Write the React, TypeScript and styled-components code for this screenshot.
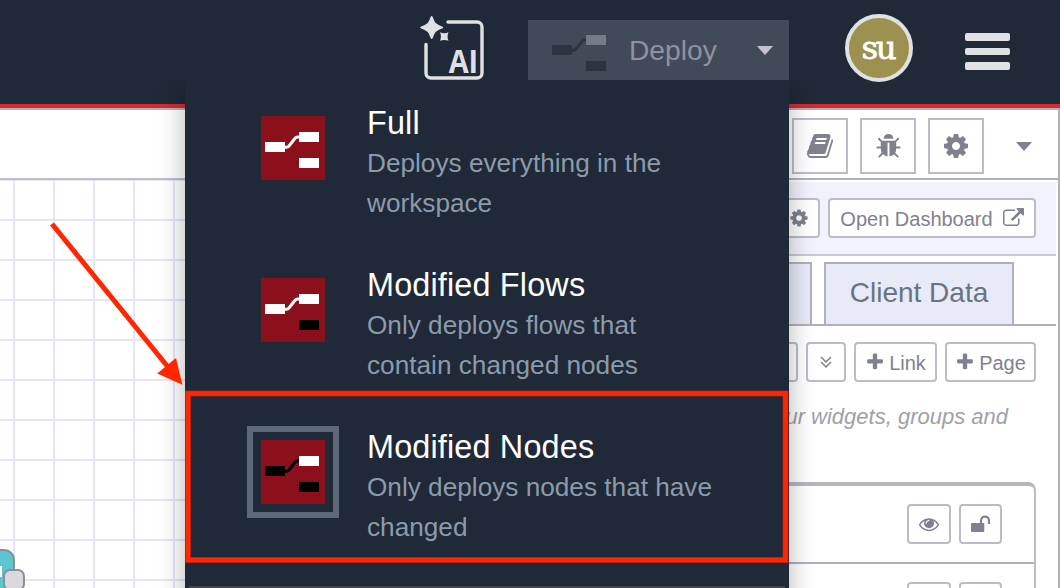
import React from 'react';
import styled, { createGlobalStyle } from 'styled-components';

const Global = createGlobalStyle`
  * { box-sizing: border-box; }
  body { margin: 0; overflow: hidden; background: #fff; font-family: "Liberation Sans", Arial, sans-serif; }
`;

const paths = {
  cog: 'M1152 896q0-106-75-181t-181-75-181 75-75 181 75 181 181 75 181-75 75-181zm512-109v222q0 12-8 23t-20 13l-185 28q-19 54-39 91 35 50 107 138 10 12 10 25t-9 23q-27 37-99 108t-94 71q-12 0-26-9l-138-108q-44 23-91 38-16 136-29 186-7 28-36 28h-222q-14 0-24.5-8.5t-11.5-21.5l-28-184q-49-16-90-37l-141 107q-10 9-25 9-14 0-25-11-126-114-165-168-7-10-7-23 0-12 8-23 15-21 51-66.5t54-70.5q-27-50-41-99l-183-27q-13-2-21-12.5t-8-23.5v-222q0-12 8-23t19-13l186-28q14-46 39-92-40-57-107-138-10-12-10-24 0-10 9-23 26-36 98.5-107.5t94.5-71.5q13 0 26 10l138 107q44-23 91-38 16-136 29-186 7-28 36-28h222q14 0 24.5 8.5t11.5 21.5l28 184q49 16 90 37l142-107q9-9 24-9 13 0 25 10 129 119 165 170 7 8 7 22 0 12-8 23-15 21-51 66.5t-54 70.5q26 50 41 98l183 28q13 2 21 12.5t8 23.5z',
  book: 'M1703 478q40 57 18 129l-275 906q-19 64-76.5 107.5t-122.5 43.5h-923q-77 0-148.5-53.5t-99.5-131.5q-24-67-2-127 0-4 3-27t4-37q1-8-3-21.5t-3-19.5q2-11 8-21t16.5-23.5 16.5-23.5q23-38 45-91.5t30-91.5q3-10 .5-30t-.5-28q3-11 17-28t17-23q21-36 42-92t25-90q1-9-2.5-32t.5-28q4-13 22-30.5t22-22.5q19-26 42.5-84.5t27.5-96.5q1-8-3-25.5t-2-26.5q2-8 9-18t18-23 17-21q8-12 16.5-30.5t15-35 16-36 19.5-32 26.5-23.5 36-11.5 47.5 5.5l-1 3q38-9 51-9h761q74 0 114 56t18 130l-274 906q-36 119-71.5 153.5t-128.5 34.5h-869q-27 0-38 15-11 16-1 43 24 70 144 70h923q29 0 56-15.5t35-41.5l300-987q7-22 5-57 38 15 59 43zm-1064 2q-4 13 2 22.5t20 9.5h608q13 0 25.5-9.5t16.5-22.5l21-64q4-13-2-22.5t-20-9.5h-608q-13 0-25.5 9.5t-16.5 22.5zm-83 256q-4 13 2 22.5t20 9.5h608q13 0 25.5-9.5t16.5-22.5l21-64q4-13-2-22.5t-20-9.5h-608q-13 0-25.5 9.5t-16.5 22.5z',
  bug: 'M1696 960q0 26-19 45t-45 19h-224q0 171-67 290l208 209q19 19 19 45t-19 45q-18 19-45 19t-45-19l-198-197q-5 5-15 13t-42 28.5-65 36.5-82 29-97 13v-896h-128v896q-51 0-101.5-13.5t-87-33-66-39-43.5-32.5l-15-14-183 207q-20 21-48 21-24 0-43-16-19-18-20.5-44.5t15.5-46.5l202-227q-58-114-58-274h-224q-26 0-45-19t-19-45 19-45 45-19h224v-294l-173-173q-19-19-19-45t19-45 45-19 45 19l173 173h844l173-173q19-19 45-19t45 19 19 45-19 45l-173 173v294h224q26 0 45 19t19 45zm-480-576h-640q0-133 93.5-226.5t226.5-93.5 226.5 93.5 93.5 226.5z',
  external: 'M1408 928v320q0 119-84.5 203.5t-203.5 84.5h-832q-119 0-203.5-84.5t-84.5-203.5v-832q0-119 84.5-203.5t203.5-84.5h704q14 0 23 9t9 23v64q0 14-9 23t-23 9h-704q-66 0-113 47t-47 113v832q0 66 47 113t113 47h832q66 0 113-47t47-113v-320q0-14 9-23t23-9h64q14 0 23 9t9 23zm384-864v512q0 26-19 45t-45 19-45-19l-176-176-652 652q-10 10-23 10t-23-10l-114-114q-10-10-10-23t10-23l652-652-176-176q-19-19-19-45t19-45 45-19h512q26 0 45 19t19 45z',
  plus: 'M1600 736v192q0 40-28 68t-68 28h-416v416q0 40-28 68t-68 28h-192q-40 0-68-28t-28-68v-416h-416q-40 0-68-28t-28-68v-192q0-40 28-68t68-28h416v-416q0-40 28-68t68-28h192q40 0 68 28t28 68v416h416q40 0 68 28t28 68z',
  eye: 'M1664 960q-152-236-381-353 61 104 61 225 0 185-131.5 316.5t-316.5 131.5-316.5-131.5-131.5-316.5q0-121 61-225-229 117-381 353 133 205 333.5 326.5t434.5 121.5 434.5-121.5 333.5-326.5zm-720-384q0-20-14-34t-34-14q-125 0-214.5 89.5t-89.5 214.5q0 20 14 34t34 14 34-14 14-34q0-86 61-147t147-61q20 0 34-14t14-34zm848 384q0 34-20 69-140 230-376.5 368.5t-499.5 138.5-499.5-139-376.5-368q-20-35-20-69t20-69q140-229 376.5-368t499.5-139 499.5 139 376.5 368q20 35 20 69z',
};

const Glyph = ({ name, size }: { name: keyof typeof paths; size: number }) => (
  <svg width={size} height={size} viewBox="0 0 1792 1792" fill="currentColor"><path d={paths[name]} /></svg>
);

const Page = styled.div`
  position: relative;
  display: flex;
  flex-direction: column;
  width: 1060px;
  height: 588px;
  overflow: hidden;
`;

const Header = styled.header`
  display: flex;
  flex: none;
  align-items: flex-start;
  height: 108px;
  padding-left: 419px;
  background: #1f2937;
  border-bottom: 4px solid #d52b2b;
`;

const AiButton = styled.div`
  width: 66px;
  margin: 15px 43px 0 0;
  height: 66px;
  svg { display: block; }
`;

const DeployButton = styled.div`
  display: flex;
  align-items: center;
  width: 261px;
  height: 60px;
  margin-top: 20px;
  padding: 0 16px 0 24px;
  background: #414a58;
  > svg { margin-top: 6px; }
`;

const DeployLabel = styled.span`
  flex: 1;
  padding-left: 23px;
  color: #91919f;
  font-size: 28.2px;
  line-height: 60px;
`;

const Caret = styled.span<{ $color: string }>`
  border: 8px solid transparent;
  border-top: 9px solid ${(p) => p.$color};
  border-bottom: 0;
`;

const Avatar = styled.div`
  display: flex;
  justify-content: center;
  width: 68px;
  height: 68px;
  margin: 14px 52px 0 56px;
  border: 4px solid #e0e1e3;
  border-radius: 50%;
  background: #9c914f;
  color: #fff;
  font: 32.5px/60px "DejaVu Serif", serif;
  letter-spacing: -2.2px;
  text-indent: -2px;
  -webkit-text-stroke: 0.8px #fff;
`;

const Burger = styled.div`
  display: flex;
  flex-direction: column;
  gap: 7px;
  width: 45px;
  margin-top: 33px;
`;
const Bar = styled.span`
  height: 7.7px;
  border-radius: 2px;
  background: #e0e1e3;
`;

const Body = styled.div`
  display: flex;
  flex: 1;
  min-height: 0;
  border-top: 2px solid #b0b0bd;
`;

const Workspace = styled.main`
  display: flex;
  flex-direction: column;
  width: 700px;
`;
const FlowTabs = styled.div`
  height: 70px;
  border-bottom: 2px solid #bfbfcb;
`;
const Canvas = styled.div`
  position: relative;
  flex: 1;
  background:
    linear-gradient(90deg, #e4e5f6 2px, transparent 2px) 13px 0 / 40px 40px,
    linear-gradient(#e4e5f6 2px, transparent 2px) 0 -1px / 40px 40px;
`;
const FlowNode = styled.svg`
  position: absolute;
  left: 0;
  top: 366px;
`;

const Sidebar = styled.aside`
  display: flex;
  flex-direction: column;
  width: 360px;
  border-right: 2px solid #b0b0bd;
  color: #80818f;
`;
const SidebarTabs = styled.div`
  display: flex;
  flex: none;
  justify-content: flex-end;
  gap: 12px;
  height: 70px;
  padding: 8px 0 0;
  border-bottom: 2px solid #b0b0bd;
`;
const SidebarTab = styled.div<{ $plain?: boolean }>`
  display: flex;
  align-items: center;
  justify-content: center;
  width: 56px;
  height: 56px;
  border: 2px solid ${(p) => (p.$plain ? 'transparent' : '#bcbcc9')};
  margin-right: ${(p) => (p.$plain ? 6 : 0)}px;
`;

const DashboardBar = styled.div`
  display: flex;
  flex: none;
  justify-content: flex-end;
  gap: 8px;
  height: 74px;
  margin: 2px 2px 0 0;
  padding: 16px 20px 0 0;
  background: #f2f2fc;
  border-bottom: 2px solid #c9c9d4;
`;
const SmallButton = styled.div<{ $w: number; $gap?: number }>`
  display: flex;
  align-items: center;
  justify-content: center;
  gap: ${(p) => p.$gap ?? 3}px;
  width: ${(p) => p.$w}px;
  height: 40px;
  border: 2px solid #bcbcc9;
  border-radius: 4px;
  background: #fff;
  font-size: 20px;
  white-space: nowrap;
`;
const ButtonText = styled.span`
  padding-top: 2px;
`;

const PanelTabs = styled.div`
  display: flex;
  flex: none;
  justify-content: flex-end;
  gap: 12px;
  height: 70px;
  margin-right: 2px;
  padding: 6px 42px 0 0;
  border-bottom: 2px solid #b0b0bd;
`;
const PanelTab = styled.div<{ $w: number }>`
  width: ${(p) => p.$w}px;
  height: 62px;
  border: 2px solid #b0b0bd;
  border-bottom: 0;
  background: #e8eaf7;
  color: #687483;
  font-size: 28px;
  line-height: 58px;
  text-align: center;
`;
const PageActions = styled.div`
  display: flex;
  flex: none;
  justify-content: flex-end;
  gap: 8px;
  margin-top: 16px;
  padding-right: 22px;
`;
const Hint = styled.p`
  flex: none;
  height: 70px;
  margin: 20px 50px 0 0;
  color: #9fa0a8;
  font-size: 22px;
  font-style: italic;
  line-height: 30px;
  text-align: right;
  white-space: nowrap;
`;
const GroupList = styled.div`
  flex: 1;
  margin: 10px 22px 0 0;
  border: 2px solid #bcbcc9;
  border-top: 4px solid #b6b6c2;
  border-bottom: 0;
  border-radius: 0 8px 0 0;
`;
const GroupRow = styled.div`
  display: flex;
  justify-content: flex-end;
  gap: 8px;
  height: 78px;
  padding: 18px 32px 0 0;
  border-bottom: 2px solid #b0b0bd;
`;

const Menu = styled.div`
  position: absolute;
  left: 185px;
  top: 80px;
  width: 604px;
  height: 530px;
  padding-top: 12px;
  background: #1f2937;
  box-shadow: 0 8px 24px rgba(0, 0, 0, 0.3);
  clip-path: inset(0 -40px 0 -40px);
`;
const MenuItem = styled.div`
  display: flex;
  height: 162px;
  padding: 10px 20px 0 62px;
`;
const IconFrame = styled.div<{ $selected?: boolean }>`
  width: 92px;
  height: 92px;
  padding: 8px;
  border: 6px solid ${(p) => (p.$selected ? '#5d6977' : 'transparent')};
`;
const IconTile = styled.div`
  display: flex;
  width: 64px;
  height: 64px;
  padding: 16px 4px;
  background: #8c101c;
`;
const MenuText = styled.div`
  padding: 1px 0 0 28px;
  white-space: nowrap;
`;
const MenuTitle = styled.div`
  color: #fff;
  font-size: 32.4px;
  line-height: 40px;
  letter-spacing: 0.16px;
`;
const MenuDescription = styled.div`
  color: #8c9bab;
  font-size: 26.2px;
  line-height: 40px;
`;
const Separator = styled.div`
  height: 2px;
  margin: 8px 4px 0;
  background: #444;
`;
const Callout = styled.svg`
  position: absolute;
  inset: 0;
`;

const FlowGlyph = ({ a, b, c }: { a: string; b: string; c: string }) => (
  <svg width="54" height="36" viewBox="0 0 54 36">
    <path d="M20 15.200h1.500Q23 15.200 24.200 13.700L29.800 6.500Q31 5 32.500 5H34" fill="none" stroke={a} strokeWidth="3" />
    <rect y="10" width="20" height="10" fill={a} />
    <rect x="34" width="20" height="10" fill={b} />
    <rect x="34" y="26" width="20" height="10" fill={c} />
  </svg>
);

const modes = [
  { title: 'Full', lines: ['Deploys everything in the', 'workspace'], colors: ['#fff', '#fff', '#fff'] },
  { title: 'Modified Flows', lines: ['Only deploys flows that', 'contain changed nodes'], colors: ['#fff', '#fff', '#000'] },
  { title: 'Modified Nodes', lines: ['Only deploys nodes that have', 'changed'], colors: ['#000', '#fff', '#000'], selected: true },
];

const EyeLock = () => (
  <>
    <SmallButton $w={44}><Glyph name="eye" size={20} /></SmallButton>
    <SmallButton $w={43}>
      <svg width="20" height="18" viewBox="0 0 20 18">
        <rect x="0" y="8" width="13.300" height="9" rx="1" fill="currentColor" />
        <path d="M10 8V5.700a4 4 0 0 1 8 0V8.900" fill="none" stroke="currentColor" strokeWidth="2.200" />
      </svg>
    </SmallButton>
  </>
);

export default function App() {
  return (
    <Page>
      <Global />
      <Header>
        <AiButton>
          <svg width="66" height="66" viewBox="0 0 66 66" fill="#e0e1e3">
            <path d="M29 7h29a5 5 0 0 1 5 5v46a5 5 0 0 1-5 5H12a5 5 0 0 1-5-5V29.500" fill="none" stroke="#e0e1e3" strokeWidth="3.400" strokeLinecap="round" />
            <path d="M12.700 1c1.400 0 1.800 4.500 4 7 2.500 2.500 7.500 3.200 7.500 4.500s-5 2-7.500 4.500c-2.200 2.500-2.600 7-4 7s-1.800-4.500-4-7c-2.500-2.500-7.500-3.200-7.500-4.500s5-2 7.500-4.500C10.900 5.500 11.300 1 12.700 1z" />
            <path d="M21 17.300c2.500 1.200 6 1.200 8.500 0-1.200 2.500-1.200 6 0 8.500-2.500-1.200-6-1.200-8.500 0 1.200-2.500 1.200-6 0-8.500z" />
            <text x="29.700" y="57.500" fontFamily="Open Sans, sans-serif" fontWeight="700" fontSize="31.500" textLength="29.500" lengthAdjust="spacingAndGlyphs">AI</text>
          </svg>
        </AiButton>
        <DeployButton>
          <FlowGlyph a="#2c3441" b="#757b89" c="#2c3441" />
          <DeployLabel>Deploy</DeployLabel>
          <Caret $color="#c3c3cf" />
        </DeployButton>
        <Avatar>su</Avatar>
        <Burger><Bar /><Bar /><Bar /></Burger>
      </Header>
      <Body>
        <Workspace>
          <FlowTabs />
          <Canvas>
            <FlowNode width="30" height="42" viewBox="0 0 30 42">
              <rect x="-40" y="4" width="54" height="60" rx="10" fill="#5cc6d0" stroke="#8d8d9a" strokeWidth="2" />
              <rect width="2" height="11" y="20" fill="#fff" />
              <rect x="4" y="24" width="20" height="20" rx="6" fill="#d9d9de" stroke="#8d8d9a" strokeWidth="2" />
            </FlowNode>
          </Canvas>
        </Workspace>
        <Sidebar>
          <SidebarTabs>
            <SidebarTab><Glyph name="book" size={28} /></SidebarTab>
            <SidebarTab><Glyph name="bug" size={27} /></SidebarTab>
            <SidebarTab><Glyph name="cog" size={28} /></SidebarTab>
            <SidebarTab $plain><Caret $color="#80818f" /></SidebarTab>
          </SidebarTabs>
          <DashboardBar>
            <SmallButton $w={42}><Glyph name="cog" size={20} /></SmallButton>
            <SmallButton $w={208} $gap={10}>
              <ButtonText>Open Dashboard</ButtonText>
              <Glyph name="external" size={21} />
            </SmallButton>
          </DashboardBar>
          <PanelTabs>
            <PanelTab $w={60} />
            <PanelTab $w={190}>Client Data</PanelTab>
          </PanelTabs>
          <PageActions>
            <SmallButton $w={40} />
            <SmallButton $w={40}>
              <svg width="12" height="13" viewBox="0 0 12 13" fill="none" stroke="currentColor" strokeWidth="1.500">
                <path d="M1 1l5 5 5-5M1 6l5 5 5-5" />
              </svg>
            </SmallButton>
            <SmallButton $w={83} $gap={4}><Glyph name="plus" size={20} /><ButtonText>Link</ButtonText></SmallButton>
            <SmallButton $w={91} $gap={4}><Glyph name="plus" size={20} /><ButtonText>Page</ButtonText></SmallButton>
          </PageActions>
          <Hint>our widgets, groups and</Hint>
          <GroupList>
            <GroupRow><EyeLock /></GroupRow>
            <GroupRow><EyeLock /></GroupRow>
          </GroupList>
        </Sidebar>
      </Body>
      <Menu>
        {modes.map((m) => (
          <MenuItem key={m.title}>
            <IconFrame $selected={m.selected}>
              <IconTile><FlowGlyph a={m.colors[0]} b={m.colors[1]} c={m.colors[2]} /></IconTile>
            </IconFrame>
            <MenuText>
              <MenuTitle>{m.title}</MenuTitle>
              {m.lines.map((l) => <MenuDescription key={l}>{l}</MenuDescription>)}
            </MenuText>
          </MenuItem>
        ))}
        <Separator />
      </Menu>
      <Callout width="1060" height="588" viewBox="0 0 1060 588">
        <rect x="188" y="393.500" width="597.500" height="166.500" fill="none" stroke="#8a2420" strokeWidth="6" />
        <rect x="188" y="393.500" width="597.500" height="166.500" fill="none" stroke="#ff2600" strokeWidth="4.800" />
        <path d="M52 224L168 367" stroke="#ff2600" strokeWidth="5" />
        <path d="M182.400 384.700L176 358l-18.800 15.500z" fill="#ff2600" />
      </Callout>
    </Page>
  );
}
